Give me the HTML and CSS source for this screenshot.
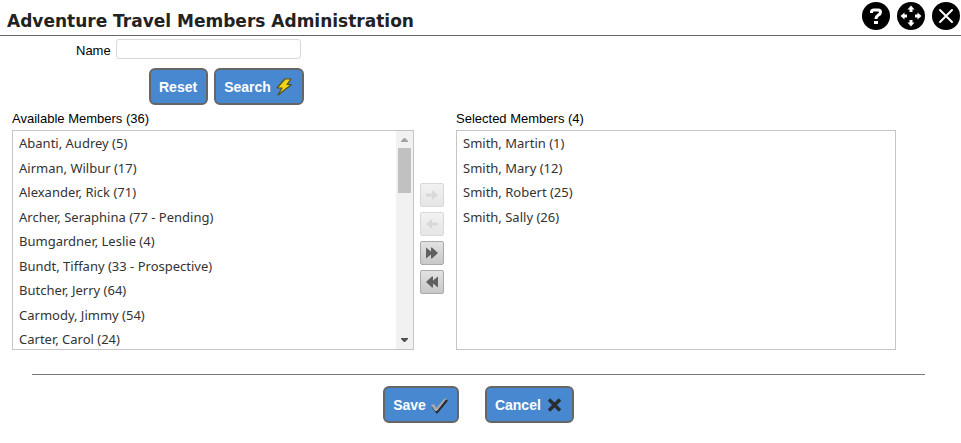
FILE: index.html
```html
<!DOCTYPE html>
<html lang="en">
<head>
<meta charset="utf-8">
<title>Adventure Travel Members Administration</title>
<link rel="stylesheet" href="styles.css">
</head>
<body>
<header class="titlebar">
  <h1>Adventure Travel Members Administration</h1>
  <div class="tools">
    <button class="tool" aria-label="Help"><svg viewBox="0 0 30 30"><circle cx="15" cy="15" r="14"/><path class="line thick" d="M10.500 12V11Q10.500 9 13 9h4q2.500 0 2.500 2.200 0 1.800-2.300 3Q15 15.500 15 18"/><path class="fill" d="M13 20h4v3h-4z"/></svg></button>
    <button class="tool" aria-label="Move"><svg viewBox="0 0 30 30"><circle cx="15" cy="15" r="14"/><path class="fill" d="M15 4.500l3.500 4h-2V11h-3V8.500h-2zM15 25.500l3.500-4h-2V19h-3v2.500h-2zM4.500 15l4-3.500v2H11v3H8.500v2zM25.500 15l-4-3.500v2H19v3h2.500v2z"/></svg></button>
    <button class="tool" aria-label="Close"><svg viewBox="0 0 30 30"><circle cx="15" cy="15" r="14"/><path class="line" d="M9 9l12 12M21 9L9 21"/></svg></button>
  </div>
</header>
<main>
  <form class="search">
    <div class="field"><label for="name">Name</label><input id="name" type="text"></div>
    <div class="search-actions">
      <button class="btn" type="reset">Reset</button>
      <button class="btn" type="button">Search <svg viewBox="0 0 18 18"><path d="M10 1h6l-4 5.500h4.500L3 17l4-7H2z" fill="#f5d512" stroke="#55501c" stroke-width="1.200" stroke-linejoin="round"/></svg></button>
    </div>
  </form>
  <div class="picker">
    <section>
      <h2 id="available">Available Members (36)</h2>
      <div class="box">
        <ul role="listbox" aria-labelledby="available">
          <li role="option">Abanti, Audrey (5)</li>
          <li role="option">Airman, Wilbur (17)</li>
          <li role="option">Alexander, Rick (71)</li>
          <li role="option">Archer, Seraphina (77 - Pending)</li>
          <li role="option">Bumgardner, Leslie (4)</li>
          <li role="option">Bundt, Tiffany (33 - Prospective)</li>
          <li role="option">Butcher, Jerry (64)</li>
          <li role="option">Carmody, Jimmy (54)</li>
          <li role="option">Carter, Carol (24)</li>
        </ul>
        <div class="scrollbar" aria-hidden="true">
          <svg viewBox="0 0 17 17"><path d="M8 7h1l3 3v1H5v-1z" fill="#a3a3a3"/></svg>
          <div class="thumb"></div>
          <svg class="down" viewBox="0 0 17 17"><path d="M5 6h7v1l-3 3H8L5 7z" fill="#505050"/></svg>
        </div>
      </div>
    </section>
    <div class="transfer">
      <button disabled aria-label="Add"><svg viewBox="0 0 16 16"><path d="M2 6.500h6V3l6 5-6 5V9.500H2z"/></svg></button>
      <button disabled aria-label="Remove"><svg viewBox="0 0 16 16"><path d="M14 6.500H8V3L2 8l6 5V9.500h6z"/></svg></button>
      <button aria-label="Add all"><svg viewBox="0 0 16 16"><path d="M2 2.500l5 4v-4h1l6 5.500-6 5.500H7v-4l-5 4z"/></svg></button>
      <button aria-label="Remove all"><svg viewBox="0 0 16 16"><path d="M14 2.500l-5 4v-4H8L2 8l6 5.500h1v-4l5 4z"/></svg></button>
    </div>
    <section>
      <h2 id="selected">Selected Members (4)</h2>
      <div class="box">
        <ul role="listbox" aria-labelledby="selected">
          <li role="option">Smith, Martin (1)</li>
          <li role="option">Smith, Mary (12)</li>
          <li role="option">Smith, Robert (25)</li>
          <li role="option">Smith, Sally (26)</li>
        </ul>
      </div>
    </section>
  </div>
</main>
<footer>
  <button class="btn">Save <svg viewBox="0 0 18 18"><path d="M3 11l4 5L17 4" fill="none" stroke="#292c30" stroke-width="2.500"/><path d="M1 9l3-1 2.500 4L14 3l3-1L7 15H5z" fill="#aaa"/></svg></button>
  <button class="btn">Cancel <svg viewBox="0 0 18 18"><path d="M4 3.500l11 11M15 3.500l-11 11" stroke="#292d32" stroke-width="3.500"/></svg></button>
</footer>
</body>
</html>
```
FILE: styles.css
```css
* { box-sizing: border-box; }
body {
  margin: 0;
  background: #fff;
  color: #000;
  font: 13px/16px "Liberation Sans", Arial, sans-serif;
}
h1, h2, ul { margin: 0; padding: 0; font-weight: normal; }
button { font-family: inherit; cursor: pointer; }
svg { display: block; }

.titlebar {
  display: flex;
  align-items: center;
  justify-content: space-between;
  height: 36px;
  padding-left: 7px;
  border-bottom: 1px solid #666;
}
h1 {
  padding-top: 6px;
  color: #222;
  font: bold 17px/24px "DejaVu Sans", Verdana, sans-serif;
}
.tools { display: flex; gap: 5px; padding-bottom: 4px; }
.tool { width: 30px; height: 30px; padding: 0; border: 0; background: none; }
.tool .line { fill: none; stroke: #fff; stroke-width: 2; stroke-linecap: round; }
.tool .thick { stroke-width: 3; stroke-linecap: butt; }
.tool .fill { fill: #fff; }

.search { padding: 3px 0 0 76px; }
.field { display: flex; align-items: center; gap: 5px; }
.field label { padding-top: 4px; }
.field input {
  width: 185px;
  height: 20px;
  border: 1px solid #d8d8d8;
  border-radius: 3px;
  font: inherit;
}
.search-actions { display: flex; gap: 6px; padding: 9px 0 0 73px; }
.btn {
  display: flex;
  align-items: center;
  gap: 4px;
  height: 37px;
  padding: 0 9px 0 8px;
  border: 2px solid #666;
  border-radius: 6px;
  background: #4888d0;
  color: #fff;
  font-size: 14px;
  font-weight: bold;
}
.btn svg { width: 18px; height: 18px; }

.picker {
  display: grid;
  grid-template-columns: 402fr 42px 440fr;
  margin: 6px 65px 0 12px;
}
h2 { padding-bottom: 3px; font-size: 13px; line-height: 16px; }
.box {
  display: flex;
  justify-content: space-between;
  height: 220px;
  overflow: hidden;
  border: 1px solid #c5c5c5;
}
.box ul {
  display: grid;
  grid-auto-rows: 25px 24px;
  align-content: start;
  padding-left: 6px;
  list-style: none;
  color: #333;
  font: 13px/24px "Noto Sans", "Open Sans", sans-serif;
}
.scrollbar { display: flex; flex-direction: column; width: 17px; background: #f1f1f1; }
.thumb { height: 45px; margin: 0 2px; background: #c1c1c1; }
.down { margin-top: auto; }

.transfer {
  display: flex;
  flex-direction: column;
  gap: 5px;
  margin: 0 6px;
  padding-top: 72px;
}
.transfer button {
  display: grid;
  place-items: center;
  width: 24px;
  height: 24px;
  padding: 0;
  border: 1px solid #aaa;
  border-radius: 2px;
  background: linear-gradient(#e2e2e2, #c8c8c8);
}
.transfer svg { width: 16px; height: 16px; fill: #606060; }
.transfer button:disabled { opacity: 0.45; }
.transfer button:disabled svg { fill: #aaa; }

footer {
  display: flex;
  justify-content: center;
  gap: 26px;
  margin: 24px 36px 0 32px;
  padding-top: 11px;
  border-top: 1px solid #777;
}
```
